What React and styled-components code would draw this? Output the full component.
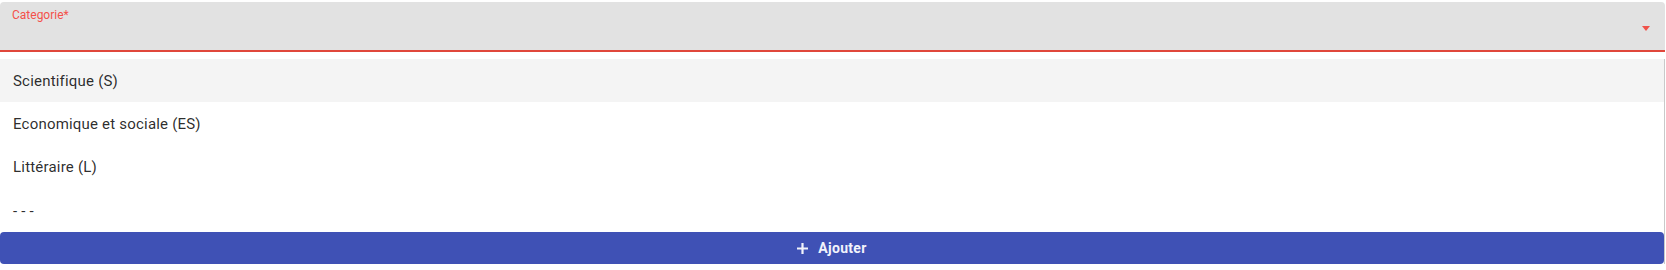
import React from 'react';
import styled, { createGlobalStyle } from 'styled-components';

const GlobalStyle = createGlobalStyle`
  body {
    margin: 0;
    background: #fff;
    font-family: Roboto, 'Liberation Sans', sans-serif;
  }
`;

const Page = styled.div`
  width: 1665px;
  padding-top: 2px;
  position: relative;
`;

const SelectField = styled.div`
  position: relative;
  height: 48px;
  background: #e2e2e2;
  border-radius: 4px 4px 0 0;
  border-bottom: 2px solid #e0473b;
`;

const Label = styled.label`
  position: absolute;
  left: 12px;
  top: 6px;
  font-size: 12px;
  color: #f4514a;
`;

const Arrow = styled.span`
  position: absolute;
  right: 15px;
  top: 24px;
  width: 0;
  height: 0;
  border-left: 4.5px solid transparent;
  border-right: 4.5px solid transparent;
  border-top: 5px solid #f0524a;
`;

const Menu = styled.ul`
  list-style: none;
  margin: 7px 0 0;
  padding: 0;
  border-right: 1px solid #c9c9c9;
`;

const Item = styled.li`
  display: flex;
  align-items: center;
  height: 43.3px;
  padding: 0 13px;
  font-size: 15px;
  letter-spacing: 0.2px;
  color: rgba(0, 0, 0, 0.84);
  background: ${p => (p.$active ? '#f4f4f4' : '#fff')};
  white-space: pre;
`;

const AddButton = styled.button`
  display: flex;
  align-items: center;
  justify-content: center;
  gap: 10px;
  width: 100%;
  height: 32px;
  border: none;
  border-radius: 4px;
  background: #3f51b5;
  color: #f2f3fb;
  font-family: Roboto, 'Liberation Sans', sans-serif;
  font-size: 14px;
  font-weight: 700;
  letter-spacing: 0.3px;
  cursor: pointer;

  & svg {
    width: 11px;
    height: 11px;
  }
`;

const options = ['Scientifique (S)', 'Economique et sociale (ES)', 'Littéraire (L)', '- - -'];

const App = () => (
  <>
    <GlobalStyle />
    <Page>
      <SelectField>
        <Label>Categorie*</Label>
        <Arrow />
      </SelectField>
      <Menu>
        {options.map((opt, i) => (
          <Item key={opt} $active={i === 0}>
            {opt}
          </Item>
        ))}
        <AddButton type="button">
          <svg viewBox="0 0 11 11">
            <path d="M5.5 0v11M0 5.5h11" stroke="currentColor" strokeWidth="2.2" />
          </svg>
          Ajouter
        </AddButton>
      </Menu>
    </Page>
  </>
);

export default App;
